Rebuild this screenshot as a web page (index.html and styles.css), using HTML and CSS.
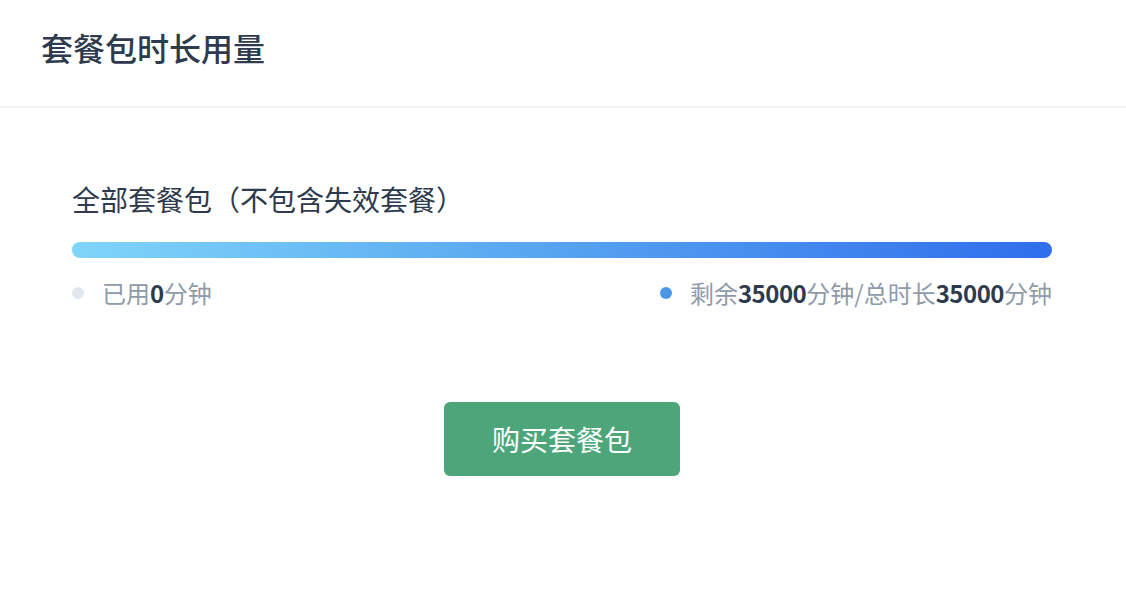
FILE: index.html
```html
<!DOCTYPE html>
<html lang="zh-CN">
<head>
<meta charset="utf-8">
<title>套餐包时长用量</title>
<link rel="stylesheet" href="styles.css">
</head>
<body>
<div class="page">
  <header class="header">
    <h1 class="title">套餐包时长用量</h1>
  </header>
  <section class="content">
    <h2 class="subtitle">全部套餐包（不包含失效套餐）</h2>
    <div class="bar"></div>
    <div class="legend">
      <div class="legend-item">
        <span class="dot dot-used"></span>
        <span class="legend-text">已用<b>0</b>分钟</span>
      </div>
      <div class="legend-item">
        <span class="dot dot-left"></span>
        <span class="legend-text">剩余<b>35000</b>分钟/总时长<b>35000</b>分钟</span>
      </div>
    </div>
    <div class="actions">
      <button class="buy-btn">购买套餐包</button>
    </div>
  </section>
</div>
</body>
</html>
```
FILE: styles.css
```css
* { box-sizing: border-box; }
html, body {
  margin: 0;
  padding: 0;
  background: #ffffff;
}
body {
  font-family: "Noto Sans CJK SC", "Noto Sans", sans-serif;
  color: #2e3b4e;
}
.header {
  height: 108px;
  padding: 31px 0 0 41px;
  border-bottom: 2px solid #f2f3f6;
}
.title {
  margin: 0;
  font-size: 32px;
  line-height: 32px;
  font-weight: 500;
  color: #2e3b4e;
}
.content {
  padding: 77px 74px 0 72px;
}
.subtitle {
  margin: 0;
  font-size: 28px;
  line-height: 28px;
  font-weight: 400;
  color: #2e3b4e;
}
.bar {
  margin-top: 29px;
  height: 16px;
  border-radius: 8px;
  background: linear-gradient(90deg, #7fd5f9 0%, #5aa8f1 45%, #2f6eec 100%);
}
.legend {
  margin-top: 23px;
  display: flex;
  justify-content: space-between;
  align-items: center;
}
.legend-item {
  display: flex;
  align-items: center;
  gap: 18px;
}
.dot {
  width: 12px;
  height: 12px;
  border-radius: 50%;
  flex: none;
}
.dot-used { background: #e3e8ef; }
.dot-left { background: #4a97e6; }
.legend-text {
  font-size: 24px;
  line-height: 24px;
  color: #8f9aa9;
}
.legend-text b {
  font-weight: 700;
  letter-spacing: -0.5px;
  color: #2e3b4e;
}
.actions {
  margin-top: 97px;
  display: flex;
  justify-content: center;
}
.buy-btn {
  width: 236px;
  height: 74px;
  border: none;
  border-radius: 6px;
  background: #4ca67a;
  color: #ffffff;
  font-family: "Noto Sans CJK SC", "Noto Sans", sans-serif;
  font-size: 28px;
  font-weight: 400;
  padding: 0;
  cursor: pointer;
}
```
